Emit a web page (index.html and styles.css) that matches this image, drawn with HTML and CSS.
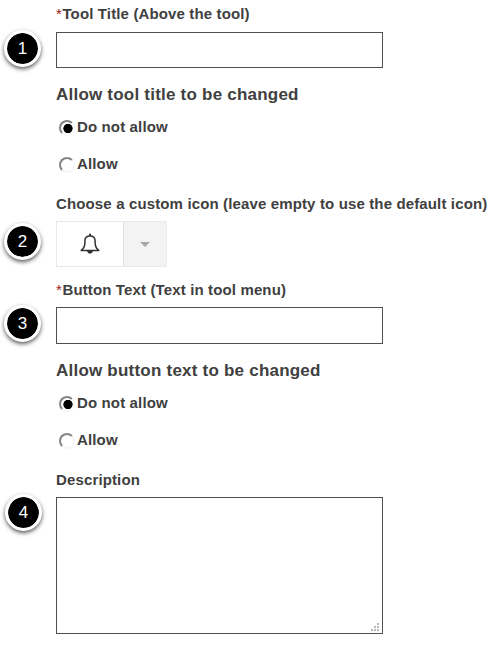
FILE: index.html
```
<!DOCTYPE html>
<html lang="en">
<head>
<meta charset="utf-8">
<title>Tool settings</title>
<link rel="stylesheet" href="styles.css">
</head>
<body>
<form class="form">
  <section class="field">
    <label class="label" for="title"><span class="required">*</span>Tool Title (Above the tool)</label>
    <input class="input" id="title" type="text">
    <span class="badge badge-title">1</span>
  </section>
  <section class="choices">
    <h2 class="heading">Allow tool title to be changed</h2>
    <label class="option"><input class="radio" type="radio" name="t" checked><span>Do not allow</span></label>
    <label class="option"><input class="radio" type="radio" name="t"><span>Allow</span></label>
  </section>
  <section class="field icon-field">
    <div class="label">Choose a custom icon (leave empty to use the default icon)</div>
    <div class="picker">
      <div class="picker-icon">
        <svg width="20" height="22" viewBox="0 0 20 22" fill="none" stroke="#303030" stroke-width="1.5" stroke-linejoin="round">
          <path d="M1.200 17.400C3.700 15.700 4.700 13.500 4.900 10V8C4.900 4.900 6.800 2.900 10 2.900S15.100 4.900 15.100 8v2c.2 3.500 1.200 5.700 3.700 7.400Z"/>
          <path d="M10 .8v2" stroke-width="2"/>
          <path d="M7.200 18h5.600c0 1.500-1.200 2.600-2.800 2.600S7.200 19.500 7.200 18Z" fill="#303030" stroke="none"/>
        </svg>
      </div>
      <div class="picker-arrow"><span class="caret"></span></div>
    </div>
    <span class="badge badge-icon">2</span>
  </section>
  <section class="field button-field">
    <label class="label" for="button"><span class="required">*</span>Button Text (Text in tool menu)</label>
    <input class="input tall" id="button" type="text">
    <span class="badge badge-button">3</span>
  </section>
  <section class="choices button-choices">
    <h2 class="heading">Allow button text to be changed</h2>
    <label class="option"><input class="radio" type="radio" name="b" checked><span>Do not allow</span></label>
    <label class="option"><input class="radio" type="radio" name="b"><span>Allow</span></label>
  </section>
  <section class="field description">
    <label class="label" for="desc">Description</label>
    <div class="area">
      <textarea class="textarea" id="desc"></textarea>
      <svg class="grip" width="8" height="8" viewBox="0 0 8 8" fill="#b8b8b8"><path d="M6 0h2v2H6zM3 3h2v2H3zM6 3h2v2H6zM0 6h2v2H0zM3 6h2v2H3zM6 6h2v2H6z"/></svg>
    </div>
    <span class="badge badge-desc">4</span>
  </section>
</form>
</body>
</html>
```
FILE: styles.css
```
* { box-sizing: border-box; }
body {
  margin: 0;
  background: #fff;
  color: #404040;
  font: bold 15px/20px "Liberation Sans", Arial, sans-serif;
  letter-spacing: .137px;
  overflow: hidden;
}
.form { padding: 4px 0 0 56px; }
.field { position: relative; }
.label { display: block; height: 28px; white-space: nowrap; }
.required { color: #a02020; font-weight: normal; letter-spacing: .6px; }
.input {
  display: block;
  width: 327px;
  height: 36px;
  border: 1px solid #505050;
  outline: 0;
}
.button-field .label { height: 27px; }
.tall { height: 37px; }
.choices { padding-top: 17px; }
.heading { margin: 0 0 12px; font-size: 17px; line-height: 20px; letter-spacing: .22px; }
.option { display: flex; align-items: center; height: 20px; margin-bottom: 17px; }
.option:last-child { margin-bottom: 0; }
.radio {
  appearance: none;
  flex: none;
  width: 16px;
  height: 16px;
  margin: 2px 2px 0 3px;
  border: 2px solid;
  border-color: #858585 #f7f7f7 #f7f7f7 #858585;
  border-radius: 50%;
  background: #fff;
}
.radio:checked { background: radial-gradient(circle at 7px 6.5px, #000 4.3px, #fff 5px); }
.icon-field { padding: 20px 0 13px; }
.icon-field .label { height: 27px; }
.picker { display: flex; width: 111px; height: 46px; border: 1px solid #e9e9e9; }
.picker-icon { width: 67px; display: flex; align-items: center; justify-content: center; border-right: 1px solid #dedede; }
.picker-arrow { flex: 1; display: flex; align-items: center; justify-content: center; background: #f3f3f3; }
.caret { border: 5px solid transparent; border-top-color: #a8a8a8; border-bottom: 0; }
.description { padding-top: 20px; }
.description .label { height: 27px; }
.area { position: relative; width: 327px; height: 137px; }
.textarea {
  display: block;
  width: 100%;
  height: 100%;
  border: 1px solid #505050;
  resize: none;
  outline: 0;
}
.grip { position: absolute; right: 4px; bottom: 3px; }
.badge {
  position: absolute;
  left: -52px;
  width: 37px;
  height: 37px;
  border: 3px solid #fff;
  border-radius: 50%;
  background: #000;
  background-clip: padding-box;
  box-shadow: 0 2px 4px rgba(0, 0, 0, .65);
  color: #fff;
  font-size: 17px;
  font-weight: normal;
  letter-spacing: 0;
  line-height: 31px;
  text-align: center;
}
.badge-title { top: 26px; }
.badge-icon { top: 49px; }
.badge-button { top: 25px; }
.badge-desc { top: 44px; left: -51px; }
```
